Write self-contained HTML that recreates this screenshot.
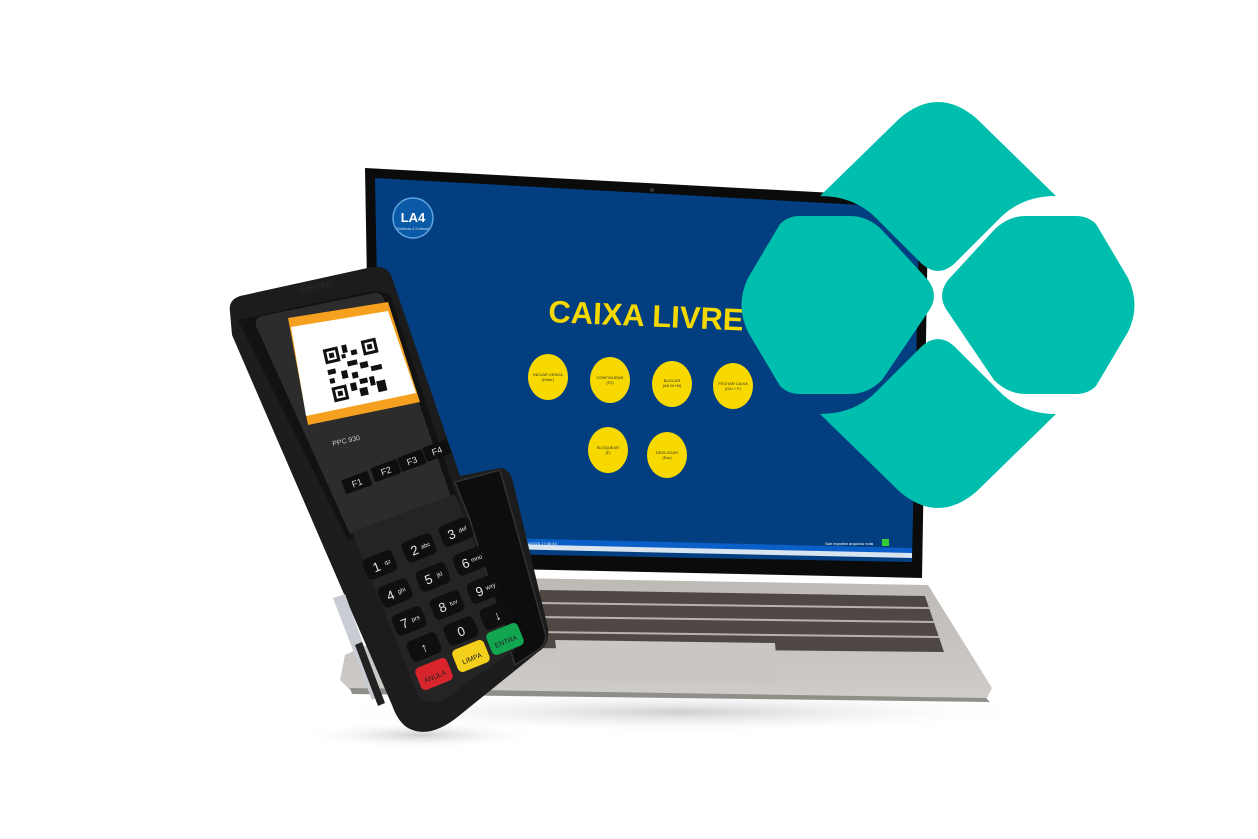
<!DOCTYPE html>
<html><head><meta charset="utf-8"><style>
html,body{margin:0;padding:0;background:#fff;}
svg{display:block;}
text{font-family:"Liberation Sans",sans-serif;}
</style></head><body>
<svg width="1258" height="839" viewBox="0 0 1258 839" xmlns="http://www.w3.org/2000/svg">
<defs>
<radialGradient id="sh" cx="0.5" cy="0.5" r="0.5">
<stop offset="0" stop-color="#cfcfcf"/><stop offset="1" stop-color="#fff" stop-opacity="0"/>
</radialGradient>
<linearGradient id="deck" x1="0" y1="0" x2="0" y2="1">
<stop offset="0" stop-color="#bdb9b5"/><stop offset="1" stop-color="#cfccc9"/>
</linearGradient>
</defs>
<ellipse cx="680" cy="712" rx="360" ry="22" fill="url(#sh)"/>
<ellipse cx="420" cy="735" rx="120" ry="14" fill="url(#sh)"/>

<polygon points="505,578 928,585 992,688 986,700 350,690 340,680 345,655 500,585" fill="url(#deck)"/>
<polygon points="350,688 986,698 990,702 352,694" fill="#8e8f88"/>
<polygon points="540,590 925,596 944,652 530,648" fill="#4e4744"/>
<g stroke="#b7b2ae" stroke-width="2">
<line x1="538" y1="603" x2="930" y2="608"/><line x1="535" y1="617" x2="934" y2="622"/><line x1="533" y1="632" x2="939" y2="637"/>
</g>
<polygon points="555,640 775,643 778,683 560,680" fill="#cac6c2"/>

<path d="M365,168 L890,196 Q920,200 928,222 L922,578 L372,566 Z" fill="#0b0b0b"/>
<path d="M375,178 L880,206 Q912,210 919,228 L912,562 L382,552 Z" fill="#033f80"/>
<polygon points="500,538 912,548 912,553 500,544" fill="#0a5fc8"/>
<polygon points="500,544 912,553 912,558 500,549" fill="#d8e4f0"/>
<circle cx="652" cy="190" r="2" fill="#333"/>
<circle cx="413" cy="218" r="20" fill="#0a5aa8" stroke="#5fa4e0" stroke-width="1.5"/>
<text x="413" y="222" font-size="13" font-weight="bold" fill="#fff" text-anchor="middle">LA4</text>
<text x="413" y="230" font-size="3.5" fill="#cde" text-anchor="middle">Sistemas &amp; Software</text>
<text x="858" y="248" font-size="15" font-weight="bold" fill="#f5d800" transform="rotate(3 858 248)">6757</text>
<text x="548" y="322" font-size="31" font-weight="bold" fill="#f5d800" transform="rotate(2.5 548 322)">CAIXA LIVRE</text>
<g fill="#f7d900">
<ellipse cx="548" cy="377" rx="20" ry="23"/><ellipse cx="610" cy="380" rx="20" ry="23"/>
<ellipse cx="672" cy="384" rx="20" ry="23"/><ellipse cx="733" cy="386" rx="20" ry="23"/>
<ellipse cx="608" cy="450" rx="20" ry="23"/><ellipse cx="667" cy="455" rx="20" ry="23"/>
</g>
<g font-size="4" fill="#333" text-anchor="middle">
<text x="548" y="376">INICIAR VENDA</text><text x="548" y="381">(Enter)</text>
<text x="610" y="379">CONFIGURAR</text><text x="610" y="384">(F2)</text>
<text x="672" y="382">BUSCAR</text><text x="672" y="387">(Alt Gr+M)</text>
<text x="733" y="385">FECHAR CAIXA</text><text x="733" y="390">(Ctrl + F)</text>
<text x="608" y="449">BLOQUEAR</text><text x="608" y="454">(F)</text>
<text x="667" y="454">DESLOGAR</text><text x="667" y="459">(Esc)</text>
</g>
<text x="520" y="545" font-size="4" fill="#fff">05/04/2024 17:40:43</text>
<text x="825" y="545" font-size="4" fill="#fff">Sair exportar arquivos nota</text>
<rect x="882" y="539" width="7" height="7" fill="#3c3"/>

<g fill="#00bead">
<path d="M820,196 L900,118 Q938,86 976,118 L1056,196 Q1022,196 1000,218 L954,264 Q938,278 922,264 L876,218 Q854,196 820,196 Z"/>
<path d="M820,414 L900,492 Q938,524 976,492 L1056,414 Q1022,414 1000,392 L954,346 Q938,332 922,346 L876,392 Q854,414 820,414 Z"/>
<path d="M800,216 L850,216 Q868,216 882,230 L928,280 Q940,296 928,312 L882,380 Q868,394 850,394 L800,394 Q788,394 780,386 L748,332 Q735,305 748,278 L780,224 Q788,216 800,216 Z"/>
<path d="M1076,216 L1026,216 Q1008,216 994,230 L948,280 Q936,296 948,312 L994,380 Q1008,394 1026,394 L1076,394 Q1088,394 1096,386 L1128,332 Q1141,305 1128,278 L1096,224 Q1088,216 1076,216 Z"/>
</g>

<path d="M230,312 Q228,300 240,296 L372,267 Q388,265 392,278 L460,476 L500,468 Q508,468 512,478 L548,628 Q550,645 538,652 L460,715 Q430,740 408,728 Q398,722 392,705 L232,335 Z" fill="#1c1c1c"/>
<path d="M238,320 L372,291 L390,294 L458,500 L348,540 Z" fill="#121212"/>
<path d="M256,326 Q254,318 262,316 L374,293 Q382,292 384,300 L452,500 L350,534 Z" fill="#2c2c2c"/>
<text x="300" y="293" font-size="11" fill="#2a2a2a" font-style="italic" transform="rotate(-12 300 293)">Gertec</text>
<polygon points="288,318 388,302 420,402 308,425" fill="#f5a11f"/>
<polygon points="291,327 388,311 416,393 306,416" fill="#fff"/>
<g transform="translate(355,370) rotate(-13)">
<rect x="-27" y="-27" width="54" height="54" fill="#fff"/>
<g fill="#111">
<rect x="-27" y="-27" width="15" height="15"/><rect x="12" y="-27" width="15" height="15"/><rect x="-27" y="12" width="15" height="15"/>
<rect x="-24" y="-24" width="9" height="9" fill="#fff"/><rect x="15" y="-24" width="9" height="9" fill="#fff"/><rect x="-24" y="15" width="9" height="9" fill="#fff"/>
<rect x="-22" y="-22" width="5" height="5"/><rect x="17" y="-22" width="5" height="5"/><rect x="-22" y="17" width="5" height="5"/>
<rect x="-8" y="-27" width="5" height="8"/><rect x="0" y="-20" width="6" height="5"/><rect x="-6" y="-10" width="10" height="5"/>
<rect x="-27" y="-6" width="8" height="5"/><rect x="-14" y="-2" width="6" height="8"/><rect x="6" y="-6" width="8" height="6"/>
<rect x="16" y="0" width="11" height="5"/><rect x="-4" y="2" width="6" height="6"/><rect x="-8" y="12" width="6" height="8"/>
<rect x="2" y="10" width="8" height="5"/><rect x="12" y="10" width="5" height="9"/><rect x="18" y="16" width="9" height="11"/>
<rect x="0" y="19" width="8" height="8"/><rect x="-27" y="3" width="5" height="5"/><rect x="-10" y="-18" width="4" height="4"/>
</g></g>
<text x="333" y="446" font-size="7" fill="#ccc" transform="rotate(-13 333 446)">PPC 930</text>
<g font-size="9" fill="#ddd" text-anchor="middle">
<g transform="translate(357,483) rotate(-20)"><rect x="-14" y="-8" width="28" height="15" rx="2" fill="#0e0e0e"/><text y="3">F1</text></g>
<g transform="translate(386,471) rotate(-20)"><rect x="-14" y="-8" width="28" height="15" rx="2" fill="#0e0e0e"/><text y="3">F2</text></g>
<g transform="translate(412,461) rotate(-20)"><rect x="-13" y="-8" width="26" height="15" rx="2" fill="#0e0e0e"/><text y="3">F3</text></g>
<g transform="translate(437,451) rotate(-20)"><rect x="-13" y="-8" width="26" height="15" rx="2" fill="#0e0e0e"/><text y="3">F4</text></g>
</g>
<path d="M455,482 L500,470 L545,632 Q548,645 535,652 L515,665 L470,520 Z" fill="#0d0d0d" stroke="#333" stroke-width="1.5"/>
<path d="M352,532 L455,494 L515,650 L440,702 L420,700 Z" fill="#242424"/>
<g font-size="13" fill="#e8e8e8" text-anchor="middle">
<g transform="translate(380,565) rotate(-22)"><rect x="-16" y="-11" width="32" height="22" rx="5" fill="#0f0f0f"/><text x="-4" y="5">1</text><text x="8" y="2" font-size="6">qz</text></g>
<g transform="translate(419,548) rotate(-22)"><rect x="-16" y="-11" width="32" height="22" rx="5" fill="#0f0f0f"/><text x="-5" y="5">2</text><text x="7" y="2" font-size="6">abc</text></g>
<g transform="translate(456,532) rotate(-22)"><rect x="-16" y="-11" width="32" height="22" rx="5" fill="#0f0f0f"/><text x="-5" y="5">3</text><text x="7" y="2" font-size="6">def</text></g>
<g transform="translate(395,593) rotate(-22)"><rect x="-16" y="-11" width="32" height="22" rx="5" fill="#0f0f0f"/><text x="-5" y="5">4</text><text x="7" y="2" font-size="6">ghi</text></g>
<g transform="translate(433,577) rotate(-22)"><rect x="-16" y="-11" width="32" height="22" rx="5" fill="#0f0f0f"/><text x="-5" y="5">5</text><text x="7" y="2" font-size="6">jkl</text></g>
<g transform="translate(470,561) rotate(-22)"><rect x="-16" y="-11" width="32" height="22" rx="5" fill="#0f0f0f"/><text x="-5" y="5">6</text><text x="7" y="2" font-size="6">mno</text></g>
<g transform="translate(409,621) rotate(-22)"><rect x="-16" y="-11" width="32" height="22" rx="5" fill="#0f0f0f"/><text x="-5" y="5">7</text><text x="7" y="2" font-size="6">prs</text></g>
<g transform="translate(447,605) rotate(-22)"><rect x="-16" y="-11" width="32" height="22" rx="5" fill="#0f0f0f"/><text x="-5" y="5">8</text><text x="7" y="2" font-size="6">tuv</text></g>
<g transform="translate(484,589) rotate(-22)"><rect x="-16" y="-11" width="32" height="22" rx="5" fill="#0f0f0f"/><text x="-5" y="5">9</text><text x="7" y="2" font-size="6">wxy</text></g>
<g transform="translate(424,647) rotate(-22)"><rect x="-16" y="-11" width="32" height="22" rx="5" fill="#0f0f0f"/><text y="5">↑</text></g>
<g transform="translate(461,631) rotate(-22)"><rect x="-16" y="-11" width="32" height="22" rx="5" fill="#0f0f0f"/><text y="5">0</text></g>
<g transform="translate(497,615) rotate(-22)"><rect x="-16" y="-11" width="32" height="22" rx="5" fill="#0f0f0f"/><text y="5">↓</text></g>
<g transform="translate(434,674) rotate(-22)" font-size="7" fill="#222"><rect x="-17" y="-12" width="34" height="24" rx="5" fill="#d8252c"/><text y="5">ANULA</text></g>
<g transform="translate(471,656) rotate(-22)" font-size="7" fill="#222"><rect x="-17" y="-12" width="34" height="24" rx="5" fill="#f4d01c"/><text y="5">LIMPA</text></g>
<g transform="translate(505,639) rotate(-22)" font-size="7" fill="#222"><rect x="-17" y="-12" width="34" height="24" rx="5" fill="#13a650"/><text y="5">ENTRA</text></g>
</g>
<polygon points="333,598 345,594 382,695 372,700" fill="#c9ccd2"/>
<polygon points="355,645 362,642 385,703 378,706" fill="#222"/>
</svg>
</body></html>
